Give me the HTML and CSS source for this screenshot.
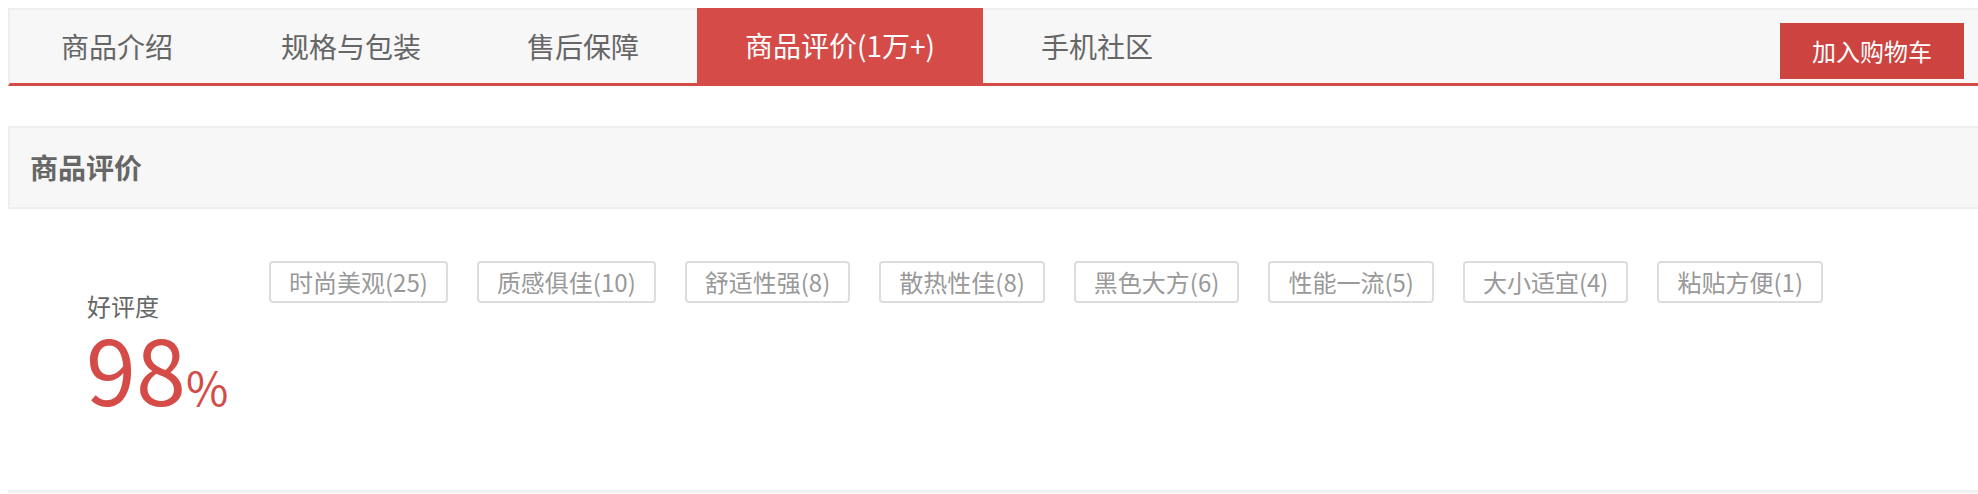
FILE: index.html
```html
<!DOCTYPE html>
<html lang="zh-CN">
<head>
    <meta charset="UTF-8">
    <meta name="viewport" content="width=device-width, initial-scale=1.0">
    <title>商品评价</title>
    <link rel="stylesheet" href="styles.css">
</head>
<body>
    <!-- 详情页导航 -->
    <div class="tabbar">
        <ul class="tabs">
            <li class="tab">商品介绍</li>
            <li class="tab">规格与包装</li>
            <li class="tab">售后保障</li>
            <li class="tab active">商品评价(1万+)</li>
            <li class="tab">手机社区</li>
        </ul>
        <a class="cart-btn" href="#">加入购物车</a>
    </div>

    <div class="section-head">商品评价</div>

    <div class="rate">
        <div class="rate-score">
            <p class="rate-label">好评度</p>
            <p class="rate-num">98<span>%</span></p>
        </div>
        <ul class="rate-tags">
            <li class="tag">时尚美观(25)</li>
            <li class="tag">质感俱佳(10)</li>
            <li class="tag">舒适性强(8)</li>
            <li class="tag">散热性佳(8)</li>
            <li class="tag">黑色大方(6)</li>
            <li class="tag">性能一流(5)</li>
            <li class="tag">大小适宜(4)</li>
            <li class="tag">粘贴方便(1)</li>
        </ul>
    </div>

    <div class="section-next"></div>
</body>
</html>
```

FILE: styles.css
```css
:root {
    --red: #d44b47;
    --btn-red: #cc4340;
    --line: #eee;
    --panel: #f7f7f7;
}

body {
    margin: 8px 0 0 8px;
    font-family: "Noto Sans CJK SC", "Noto Sans", sans-serif;
    color: #666;
    overflow: hidden;
}

/* 导航条 */
.tabbar {
    display: flex;
    height: 73px;
    background: var(--panel);
    border: 2px solid var(--line);
    border-right: 0;
    border-bottom: 3px solid var(--red);
}

.tabs {
    display: flex;
    margin: 0;
    padding: 0;
    list-style: none;
}

.tab {
    padding: 0 53px;
    font-size: 28px;
    line-height: 73px;
    cursor: pointer;
}

.tab:first-child {
    padding: 0 55px 0 51px;
}

.tab.active {
    margin: -2px 5px 0;
    padding: 0 48px;
    line-height: 75px;
    background: var(--red);
    color: #fff;
}

.cart-btn {
    align-self: flex-start;
    margin: 13px 14px 0 auto;
    padding: 0 32px;
    height: 56px;
    line-height: 56px;
    font-size: 24px;
    color: #fff;
    background: var(--btn-red);
    text-decoration: none;
}

/* 评价 */
.section-head {
    margin-top: 40px;
    height: 79px;
    line-height: 79px;
    padding-left: 20px;
    background: var(--panel);
    border: 2px solid var(--line);
    border-right: 0;
    font-size: 28px;
    font-weight: bold;
}

.rate {
    display: flex;
    height: 281px;
}

.rate-score {
    box-sizing: border-box;
    width: 261px;
    padding: 85px 0 0 79px;
}

.rate-label {
    margin: 0;
    font-size: 24px;
    line-height: 24px;
}

.rate-num {
    margin: 4px 0 0 -1px;
    font-size: 90px;
    line-height: 1;
    color: var(--red);
}

.rate-num span {
    font-size: 46px;
}

.rate-tags {
    display: flex;
    align-items: flex-start;
    gap: 29px;
    margin: 0;
    padding: 52px 0 0;
    list-style: none;
}

.tag {
    padding: 0 18px;
    line-height: 38px;
    font-size: 24px;
    color: #999;
    border: 2px solid #ddd;
    border-radius: 4px;
    white-space: nowrap;
}

.section-next {
    height: 40px;
    background: var(--panel);
    border-top: 2px solid var(--line);
}
```
